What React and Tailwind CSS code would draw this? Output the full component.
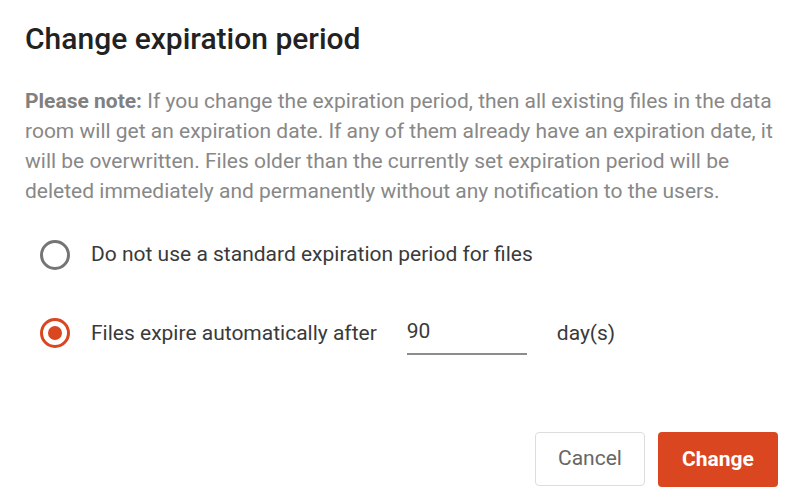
import React, { useState } from "react";

const FONT = { fontFamily: "Roboto, 'Liberation Sans', sans-serif" };

function Radio({ checked }) {
  return (
    <span
      className={
        "grid h-[30px] w-[30px] shrink-0 place-items-center rounded-full border-[3px] " +
        (checked ? "border-[#d9461f]" : "border-[#757575]")
      }
    >
      {checked && <span className="h-[14px] w-[14px] rounded-full bg-[#d9461f]" />}
    </span>
  );
}

export default function App() {
  const [mode, setMode] = useState("auto");
  const [days, setDays] = useState("90");

  return (
    <div className="h-[504px] w-[801px] bg-white pl-[25px] pr-[20px] pt-[21px]" style={FONT}>
      <h1 className="text-[30px] font-medium leading-[36px] text-[#222]">
        Change expiration period
      </h1>

      <p className="mt-[29px] text-[21px] leading-[30px] text-[#888]">
        <b className="font-bold text-[#808080]">Please note:</b> If you change the expiration
        period, then all existing files in the data room will get an expiration date. If any of
        them already have an expiration date, it will be overwritten. Files older than the
        currently set expiration period will be deleted immediately and permanently without any
        notification to the users.
      </p>

      <div className="mt-[33px] flex flex-col gap-[41px] pl-[15px]">
        <label className="flex items-center gap-[21px]" onClick={() => setMode("none")}>
          <Radio checked={mode === "none"} />
          <span className="text-[21px] text-[#3a3a3a]">
            Do not use a standard expiration period for files
          </span>
        </label>

        <label className="flex items-center" onClick={() => setMode("auto")}>
          <Radio checked={mode === "auto"} />
          <span className="ml-[21px] text-[21px] text-[#3a3a3a]">
            Files expire automatically after
          </span>
          <input
            value={days}
            onChange={(e) => setDays(e.target.value)}
            className="ml-[30px] w-[120px] border-b-2 border-[#8c8c8c] pb-[6px] pt-[4px] text-[21px] text-[#3a3a3a] outline-none"
          />
          <span className="ml-[30px] text-[21px] text-[#3a3a3a]">day(s)</span>
        </label>
      </div>

      <div className="mt-[77px] flex justify-end gap-[13px] pr-[3px]">
        <button className="h-[54px] w-[110px] rounded-[4px] border border-[#ddd] bg-white text-[21px] text-[#666]">
          Cancel
        </button>
        <button className="h-[55px] w-[120px] rounded-[4px] bg-[#d9461f] text-[21px] font-bold text-white">
          Change
        </button>
      </div>
    </div>
  );
}
